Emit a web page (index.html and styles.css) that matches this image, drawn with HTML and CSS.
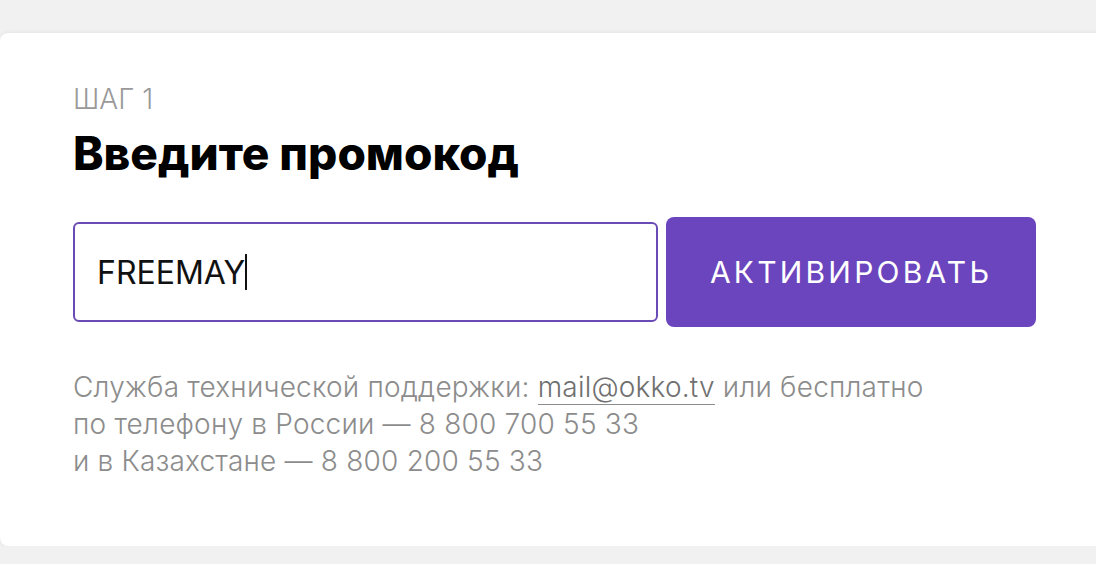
FILE: index.html
```html
<!DOCTYPE html>
<html lang="ru">
<head>
    <meta charset="UTF-8">
    <meta name="viewport" content="width=device-width, initial-scale=1.0">
    <title>Промокод</title>
    <link rel="stylesheet" href="styles.css">
</head>
<body>

    <div class="card">
        <!-- Step title -->
        <div class="step">ШАГ 1</div>
        <h1 class="title">Введите промокод</h1>

        <!-- Promo code form -->
        <form class="promo-form">
            <div class="promo-input">
                <span class="promo-value">FREEMAY</span><span class="caret"></span>
            </div>
            <button type="button" class="promo-button">АКТИВИРОВАТЬ</button>
        </form>

        <!-- Support -->
        <p class="support">
            Служба технической поддержки: <a href="#" class="support-link">mail@okko.tv</a> или бесплатно<br>
            по телефону в России — 8 800 700 55 33<br>
            и в Казахстане — 8 800 200 55 33
        </p>
    </div>

</body>
</html>
```

FILE: styles.css
```css
body {
    font-family: Inter, "Noto Sans", sans-serif;
    background-color: #f1f1f1;
    margin: 0;
    padding: 33px 0 0 0;
    overflow: hidden;
}
.card {
    width: 1120px;
    height: 513px;
    box-sizing: border-box;
    padding: 50px 0 0 73px;
    background-color: white;
    border-radius: 8px;
    box-shadow: 0 0 4px rgba(0, 0, 0, 0.08);
}
.step {
    font-size: 28px;
    font-weight: 300;
    line-height: 32px;
    color: #9a9a9a;
}
.title {
    margin: 11px 0 0 0;
    font-size: 46px;
    font-weight: 800;
    line-height: 54px;
    color: #000;
}
.promo-form {
    display: flex;
    align-items: center;
    gap: 8px;
    margin-top: 37px;
}
.promo-input {
    display: flex;
    align-items: center;
    width: 585px;
    height: 100px;
    box-sizing: border-box;
    padding: 0 22px;
    border: 2px solid #6a4bb5;
    border-radius: 6px;
}
.promo-value {
    font-size: 32px;
    color: #111;
}
.caret {
    display: inline-block;
    width: 2px;
    height: 36px;
    background-color: #111;
}
.promo-button {
    width: 370px;
    height: 110px;
    border: none;
    border-radius: 8px;
    background-color: #6b45be;
    color: white;
    font-family: inherit;
    font-size: 30px;
    font-weight: 400;
    letter-spacing: 3.2px;
}
.support {
    margin: 42px 0 0 0;
    font-size: 28px;
    font-weight: 300;
    letter-spacing: 0.2px;
    line-height: 37px;
    color: #8c8c8c;
}
.support-link {
    color: #707070;
    text-decoration: none;
    border-bottom: 1px solid #8c8c8c;
}
```
